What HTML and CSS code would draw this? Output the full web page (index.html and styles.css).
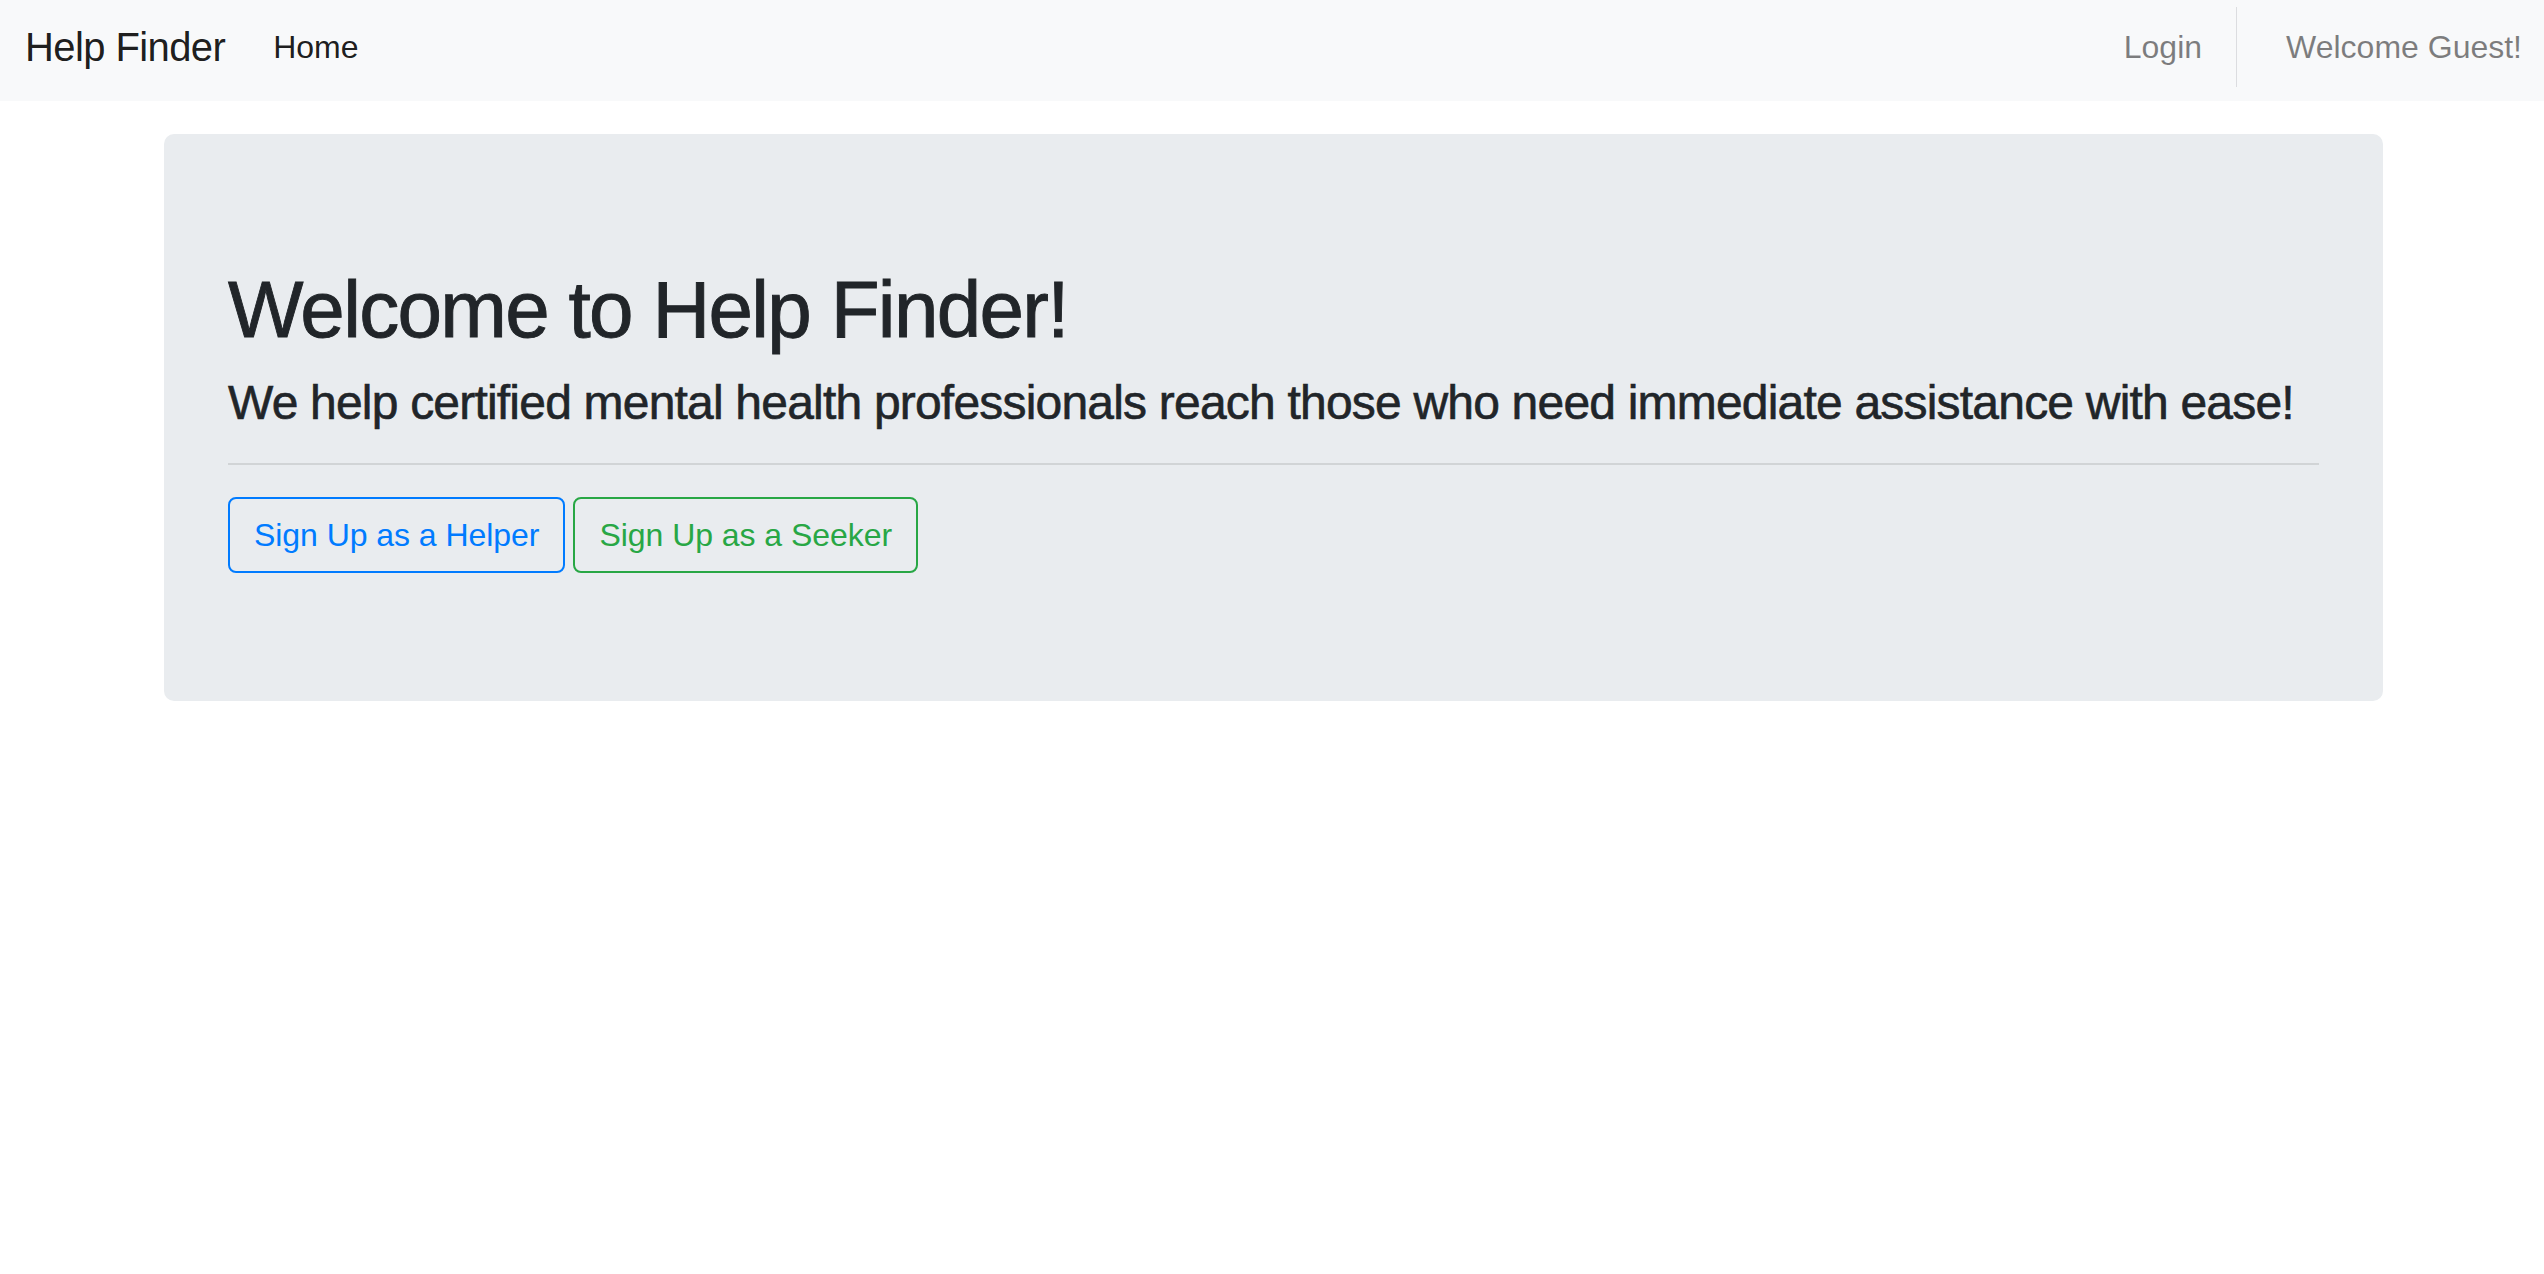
FILE: index.html
```html
<!DOCTYPE html>
<html lang="en">
<head>
<meta charset="utf-8">
<title>Help Finder</title>
<link rel="stylesheet" href="styles.css">
</head>
<body>
<nav class="navbar">
  <a class="brand" href="#">Help Finder</a>
  <ul class="nav-left">
    <li><a class="nav-link active" href="#">Home</a></li>
  </ul>
  <div class="nav-right">
    <a class="nav-link login" href="#">Login</a>
    <span class="divider"></span>
    <span class="nav-text">Welcome Guest!</span>
  </div>
</nav>
<main class="page">
  <section class="jumbotron">
    <h1 class="title">Welcome to Help Finder!</h1>
    <h4 class="lead">We help certified mental health professionals reach those who need immediate assistance with ease!</h4>
    <hr class="rule">
    <div class="actions">
      <a class="btn btn-blue" href="#">Sign Up as a Helper</a>
      <a class="btn btn-green" href="#">Sign Up as a Seeker</a>
    </div>
  </section>
</main>
</body>
</html>
```

FILE: styles.css
```css
* { box-sizing: border-box; }
html, body { margin: 0; padding: 0; }
body {
  font-family: "Liberation Sans", Arial, sans-serif;
  color: #212529;
  background: #fff;
}
a { text-decoration: none; }

.navbar {
  display: flex;
  align-items: center;
  height: 101px;
  padding: 7px 22px 14px 25px;
  background: #f8f9fa;
}
.brand {
  font-size: 40px;
  line-height: 60px;
  letter-spacing: -0.6px;
  color: rgba(0,0,0,0.9);
  margin-right: 32px;
}
.nav-left {
  list-style: none;
  margin: 0;
  padding: 0;
  display: flex;
  flex: 1;
}
.nav-link {
  font-size: 32px;
  line-height: 48px;
  padding: 0 16px;
  color: rgba(0,0,0,0.5);
  display: block;
}
.nav-link.active { color: rgba(0,0,0,0.9); }
.nav-right {
  display: flex;
  align-items: center;
  height: 80px;
}
.login { padding-right: 34px; }
.divider {
  width: 1px;
  align-self: stretch;
  background: #dcdde0;
  margin-right: 49px;
}
.nav-text {
  font-size: 32px;
  line-height: 48px;
  color: rgba(0,0,0,0.5);
}

.page {
  padding: 33px 161px 0 164px;
}
.jumbotron {
  background: #e9ecef;
  border-radius: 10px;
  padding: 128px 64px;
}
.title {
  margin: 0 0 16px;
  font-size: 80px;
  line-height: 96px;
  font-weight: 400;
  letter-spacing: -1.7px;
  -webkit-text-stroke: 0.9px currentColor;
}
.lead {
  margin: 0;
  font-size: 48px;
  line-height: 57.6px;
  font-weight: 400;
  letter-spacing: -0.8px;
  -webkit-text-stroke: 0.6px currentColor;
}
.rule {
  margin: 31px 0 32px;
  border: 0;
  border-top: 2px solid rgba(0,0,0,0.1);
}
.actions {
  display: flex;
  gap: 8px;
}
.btn {
  display: inline-block;
  font-size: 32px;
  line-height: 48px;
  padding: 12px 24px;
  border: 2px solid;
  border-radius: 8px;
  letter-spacing: -0.05px;
  background: transparent;
}
.btn-blue { color: #007bff; border-color: #007bff; }
.btn-green { color: #28a745; border-color: #28a745; }
```
